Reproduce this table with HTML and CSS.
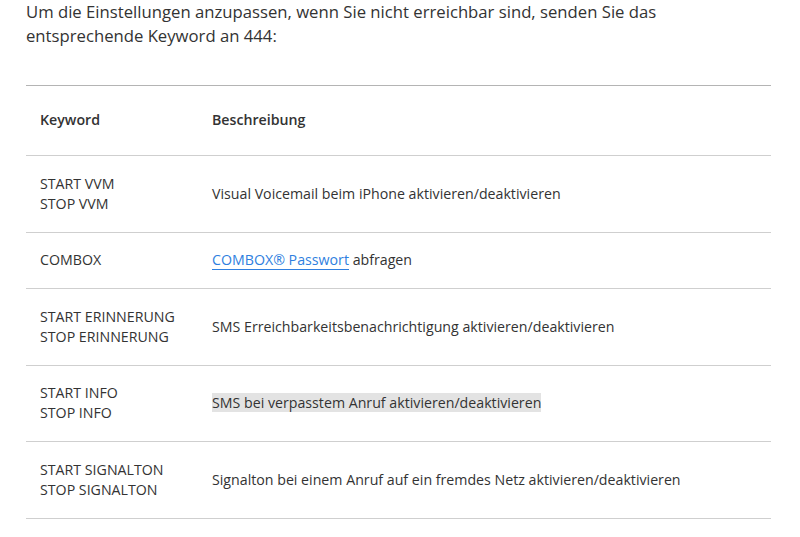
FILE: index.html
```html
<!DOCTYPE html>
<html lang="de">
<head>
  <meta charset="UTF-8" />
  <meta name="viewport" content="width=device-width, initial-scale=1.0"/>
  <title>Keywords an 444</title>
  <link rel="stylesheet" href="styles.css">
</head>
<body>
  <div class="content">
    <p class="intro">Um die Einstellungen anzupassen, wenn Sie nicht erreichbar sind, senden Sie das entsprechende Keyword an 444:</p>

    <table class="keywords">
      <thead>
        <tr><th class="col-key">Keyword</th><th>Beschreibung</th></tr>
      </thead>
      <tbody>
        <tr>
          <td>START VVM<br>STOP VVM</td>
          <td>Visual Voicemail beim iPhone aktivieren/deaktivieren</td>
        </tr>
        <tr>
          <td>COMBOX</td>
          <td><a href="#">COMBOX® Passwort</a> abfragen</td>
        </tr>
        <tr>
          <td>START ERINNERUNG<br>STOP ERINNERUNG</td>
          <td>SMS Erreichbarkeitsbenachrichtigung aktivieren/deaktivieren</td>
        </tr>
        <tr>
          <td>START INFO<br>STOP INFO</td>
          <td><span class="marked">SMS bei verpasstem Anruf aktivieren/deaktivieren</span></td>
        </tr>
        <tr>
          <td>START SIGNALTON<br>STOP SIGNALTON</td>
          <td>Signalton bei einem Anruf auf ein fremdes Netz aktivieren/deaktivieren</td>
        </tr>
      </tbody>
    </table>
  </div>
</body>
</html>
```

FILE: styles.css
```css
body {
  margin: 0;
  font-family: "Open Sans", sans-serif;
  color: #333;
  background: #fff;
}
.content {
  padding: 0 29px 0 26px;
}
.intro {
  max-width: 640px;
  margin: 0 0 37px;
  font-size: 16.7px;
  line-height: 24px;
}
.keywords {
  width: 100%;
  border-collapse: collapse;
  font-size: 14.2px;
  line-height: 20.25px;
}
.keywords th,
.keywords td {
  text-align: left;
  vertical-align: middle;
  padding: 17.5px 14px;
  border-bottom: 1px solid #cfcfcf;
}
.keywords th {
  font-weight: 600;
  padding: 24px 14px 25px;
  border-top: 1px solid #b4b4b4;
}
.keywords .col-key {
  width: 144px;
}
.keywords a {
  color: #2f7fe0;
  text-decoration: none;
  border-bottom: 1px solid #2f7fe0;
}
.marked {
  background: #e3e3e3;
}
```
